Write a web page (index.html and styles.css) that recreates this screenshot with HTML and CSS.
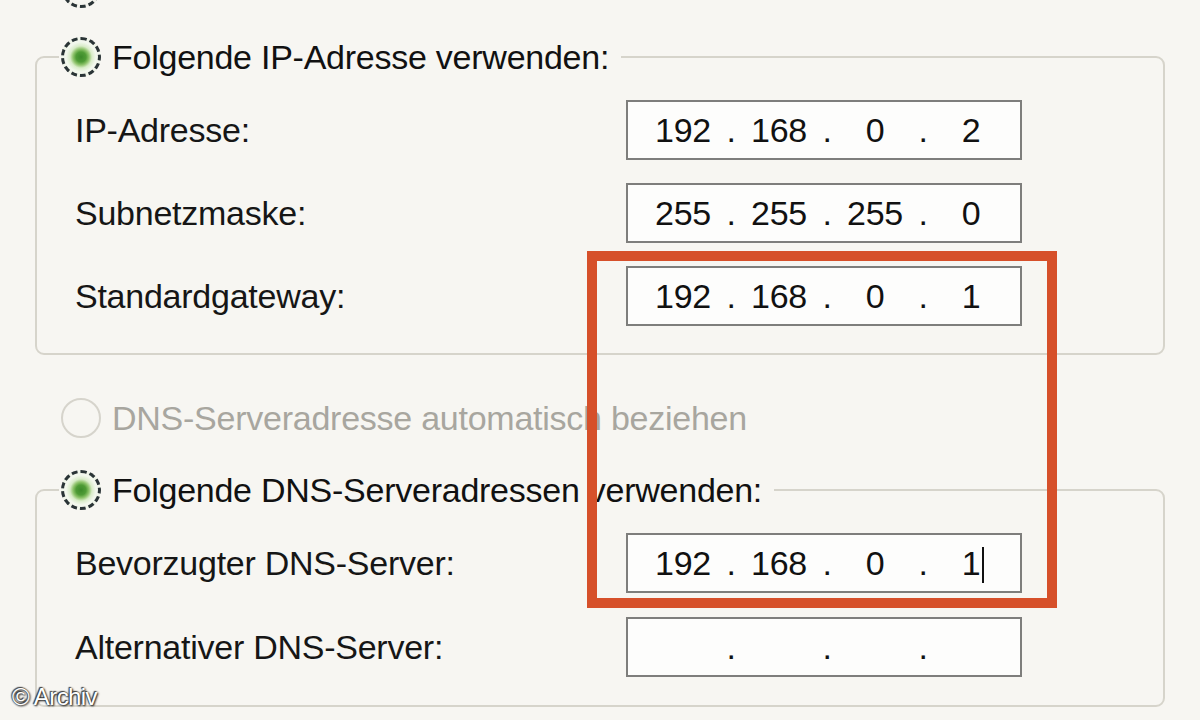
FILE: index.html
```html
<!DOCTYPE html>
<html lang="de">
<head>
<meta charset="utf-8">
<title>TCP/IP Eigenschaften</title>
<link rel="stylesheet" href="styles.css">
</head>
<body>
<div class="page">
  <div class="radio-row top-cut">
    <span class="radio"></span>
  </div>

  <fieldset class="group group-ip">
    <legend class="legend">
      <span class="radio checked"></span>
      <span class="radio-label">Folgende IP-Adresse verwenden:</span>
    </legend>
    <div class="rows">
      <div class="label">IP-Adresse:</div>
      <div class="ipbox">
        <span class="oct">192</span><span class="dot">.</span><span class="oct">168</span><span class="dot">.</span><span class="oct">0</span><span class="dot">.</span><span class="oct">2</span>
      </div>
      <div class="label">Subnetzmaske:</div>
      <div class="ipbox">
        <span class="oct">255</span><span class="dot">.</span><span class="oct">255</span><span class="dot">.</span><span class="oct">255</span><span class="dot">.</span><span class="oct">0</span>
      </div>
      <div class="label">Standardgateway:</div>
      <div class="ipbox">
        <span class="oct">192</span><span class="dot">.</span><span class="oct">168</span><span class="dot">.</span><span class="oct">0</span><span class="dot">.</span><span class="oct">1</span>
      </div>
    </div>
  </fieldset>

  <div class="radio-row disabled">
    <span class="radio"></span>
    <span class="radio-label">DNS-Serveradresse automatisch beziehen</span>
  </div>

  <fieldset class="group group-dns">
    <legend class="legend">
      <span class="radio checked"></span>
      <span class="radio-label">Folgende DNS-Serveradressen verwenden:</span>
    </legend>
    <div class="rows rows-dns">
      <div class="label">Bevorzugter DNS-Server:</div>
      <div class="ipbox">
        <span class="oct">192</span><span class="dot">.</span><span class="oct">168</span><span class="dot">.</span><span class="oct">0</span><span class="dot">.</span><span class="oct caret-host">1<span class="caret"></span></span>
      </div>
      <div class="label">Alternativer DNS-Server:</div>
      <div class="ipbox">
        <span class="oct"></span><span class="dot">.</span><span class="oct"></span><span class="dot">.</span><span class="oct"></span><span class="dot">.</span><span class="oct"></span>
      </div>
    </div>
  </fieldset>

  <div class="highlight"></div>
  <div class="watermark">© Archiv</div>
</div>
</body>
</html>
```

FILE: styles.css
```css
html, body {
  margin: 0;
  padding: 0;
}

body {
  background: #f6f5f1;
  font-family: "Liberation Sans", Arial, sans-serif;
  font-size: 34px;
  letter-spacing: -0.25px;
  color: #111;
}

.page {
  position: relative;
  width: 1200px;
  height: 720px;
  overflow: hidden;
  background: #f7f6f2;
}

/* radio buttons */
.radio-row {
  display: flex;
  align-items: center;
  gap: 11px;
  height: 40px;
  padding-left: 61px;
}

.top-cut {
  margin-top: -32px;
}

.radio {
  box-sizing: border-box;
  width: 40px;
  height: 40px;
  flex: none;
  border-radius: 50%;
  border: 3px dashed #2a3436;
  background: radial-gradient(circle, #ffffff 0, #f4f4ee 70%, #e3e2da 100%);
}

.radio.checked {
  background: radial-gradient(circle, #3c8a2a 0, #4f9c36 5px, #8fc46c 8px, #d9ecc9 11px, #f3f8ee 15px, #e8ecdf 100%);
}

.radio-label {
  line-height: 40px;
  white-space: nowrap;
}

.disabled {
  margin-top: 43px;
}

.disabled .radio {
  border: 2px solid #d6d4cc;
  background: #f7f6f2;
}

.disabled .radio-label {
  color: #a8a69f;
}

/* group boxes */
.group {
  margin: 29px 35px 0;
  padding: 0;
  border: 2px solid #d6d4cb;
  border-radius: 9px;
  min-width: 0;
}

.group-dns {
  margin-top: 32px;
}

.legend {
  display: flex;
  align-items: center;
  gap: 11px;
  margin-left: 22px;
  padding: 0 12px 0 2px;
  height: 40px;
}

.rows {
  display: grid;
  grid-template-columns: 1fr 396px;
  grid-auto-rows: 60px;
  row-gap: 23px;
  align-items: center;
  padding: 23px 141px 27px 38px;
}

.rows-dns {
  row-gap: 24px;
  padding-bottom: 28px;
}

.label {
  white-space: nowrap;
  color: #161616;
}

/* IP address boxes */
.ipbox {
  box-sizing: border-box;
  height: 60px;
  display: flex;
  align-items: center;
  padding-left: 15px;
  background: #fdfdfc;
  border: 2px solid #7e7e7c;
}

.oct {
  width: 80px;
  text-align: center;
  flex: none;
}

.dot {
  width: 16px;
  text-align: center;
  flex: none;
}

.caret-host {
  position: relative;
}

.caret {
  position: absolute;
  top: 3px;
  left: 51px;
  width: 2px;
  height: 36px;
  background: #111;
}

/* overlays */
.highlight {
  position: absolute;
  left: 587px;
  top: 251px;
  width: 470px;
  height: 357px;
  box-sizing: border-box;
  border: 10px solid #d6502a;
}

.watermark {
  position: absolute;
  left: 12px;
  top: 683px;
  font-size: 24px;
  letter-spacing: -0.6px;
  color: #ffffff;
  text-shadow: 0 0 2px #222, 1px 1px 2px #222, -1px -1px 1px #444;
}
```
